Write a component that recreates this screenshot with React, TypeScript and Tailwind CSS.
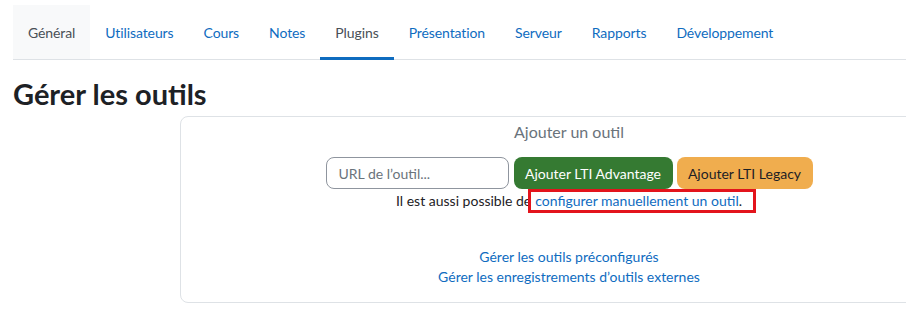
import React from "react";

const tabs = [
  { label: "Général", state: "hover" },
  { label: "Utilisateurs", state: "" },
  { label: "Cours", state: "" },
  { label: "Notes", state: "" },
  { label: "Plugins", state: "active" },
  { label: "Présentation", state: "" },
  { label: "Serveur", state: "" },
  { label: "Rapports", state: "" },
  { label: "Développement", state: "" },
];

export default function App() {
  return (
    <div className="w-[906px] h-[327px] overflow-hidden bg-white font-['Lato',sans-serif] text-[#1d2125]">
      <nav className="ml-[13px] mt-[5px] flex h-[55px] border-b border-[#dee2e6] tracking-[-0.1px]">
        {tabs.map((t) => (
          <div
            key={t.label}
            className={
              t.state === "hover"
                ? "flex items-center px-[15px] bg-[#f8f9fa] text-[#495057] text-[14px] -mb-px border-b border-[#dee2e6]"
                : t.state === "active"
                ? "flex items-center px-[15px] text-[#495057] text-[14px] -mb-px border-b-[3px] border-[#0f6cbf] pt-[2px]"
                : "flex items-center px-[15px] text-[#0f6cbf] text-[14px]"
            }
          >
            {t.label}
          </div>
        ))}
      </nav>
      <h2 className="ml-[13px] mt-[17px] text-[29px] font-bold leading-[34px] text-[#1d2125]">
        Gérer les outils
      </h2>
      <div className="ml-[180px] mt-[5px] w-[778px] h-[187px] rounded-lg border border-[#dee2e6] flex flex-col items-center">
        <div className="mt-[4px] text-[16px] leading-[22px] text-[#6a737b]">Ajouter un outil</div>
        <div className="mt-[14px] flex items-center gap-[4px]">
          <div className="mr-px w-[183px] h-[32px] rounded-lg border border-[#8f959e] flex items-center px-[12px] text-[14px] text-[#6a737b]">
            URL de l’outil...
          </div>
          <div className="h-[32px] w-[159px] rounded-lg bg-[#357a32] text-white text-[14px] flex items-center justify-center">
            Ajouter LTI Advantage
          </div>
          <div className="h-[32px] w-[136px] rounded-lg bg-[#f0ad4e] text-[#1d2125] text-[14px] flex items-center justify-center">
            Ajouter LTI Legacy
          </div>
        </div>
        <div className="mt-px text-[14px] leading-[22px] flex items-center">
          <span>Il est aussi possible de</span>
          <span className="relative ml-[4px]">
            <span className="text-[#0f6cbf]">configurer manuellement un outil</span>
            <span>.</span>
            <span className="absolute left-[-7px] right-[-14px] top-[-1px] h-[24px] border-[3px] border-[#e3141c]"></span>
          </span>
        </div>
        <div className="mt-[35px] flex flex-col items-center text-[14px] leading-[20px] text-[#0f6cbf]">
          <span>Gérer les outils préconfigurés</span>
          <span>Gérer les enregistrements d’outils externes</span>
        </div>
      </div>
    </div>
  );
}
